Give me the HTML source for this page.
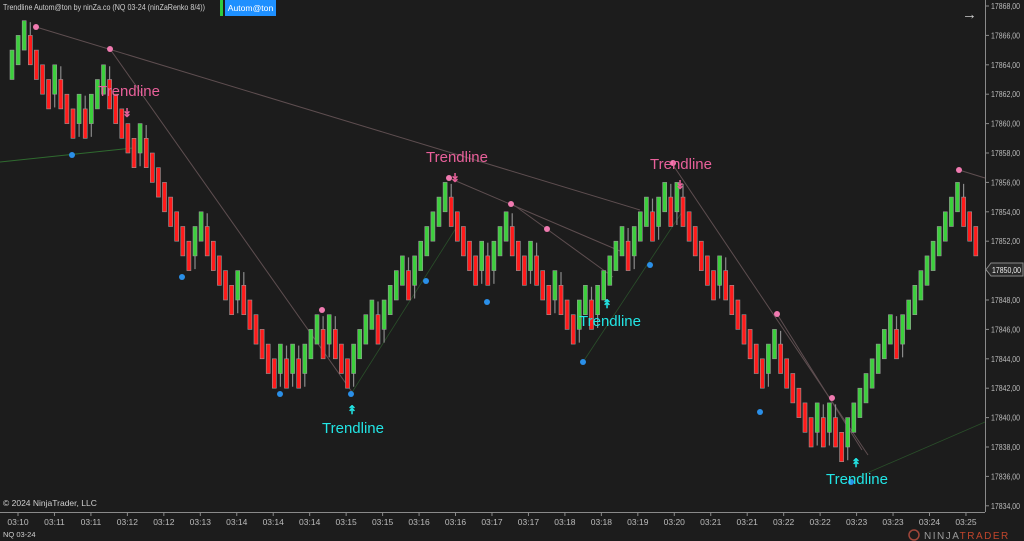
<!DOCTYPE html>
<html><head><meta charset="utf-8"><style>
html,body{margin:0;padding:0;background:#1c1c1c;width:1024px;height:541px;overflow:hidden}
svg{display:block}
text{font-family:"Liberation Sans",sans-serif}
</style></head><body>
<svg id="c" width="1024" height="541" viewBox="0 0 1024 541" xmlns="http://www.w3.org/2000/svg">
<rect width="1024" height="541" fill="#1c1c1c"/>
<g id="lines" fill="none" stroke-width="1">
<line x1="0" y1="162" x2="133" y2="148" stroke="#2f6a2f"/>
<line x1="351" y1="394" x2="458" y2="225" stroke="#2a4f2a" stroke-width="0.8"/>
<line x1="583" y1="362" x2="682" y2="212" stroke="#2a4f2a" stroke-width="0.8"/>
<line x1="851" y1="480" x2="985" y2="422" stroke="#2a4f2a" stroke-width="0.8"/>
<line x1="36" y1="27" x2="640" y2="210" stroke="#5e4e50"/>
<line x1="110" y1="49" x2="352" y2="392" stroke="#5e4e50"/>
<line x1="449" y1="178" x2="620" y2="251" stroke="#5e4e50"/>
<line x1="511" y1="203" x2="613" y2="277" stroke="#5e4e50"/>
<line x1="673" y1="165" x2="868" y2="455" stroke="#5e4e50"/>
<line x1="777" y1="314" x2="862" y2="450" stroke="#5e4e50"/>
<line x1="959" y1="170" x2="985" y2="178" stroke="#5e4e50"/>
</g>
<g id="bars"></g>
<g id="dots"></g>
<g font-size="15">
<text x="98" y="96" fill="#e8609a">Trendline</text>
<text x="426" y="162" fill="#e8609a">Trendline</text>
<text x="650" y="169" fill="#e8609a">Trendline</text>
<text x="322" y="433" fill="#22e5e5">Trendline</text>
<text x="579" y="326" fill="#22e5e5">Trendline</text>
<text x="826" y="484" fill="#22e5e5">Trendline</text>
</g>
<g font-size="12" font-weight="bold" text-anchor="middle">
<text x="127" y="117" fill="#e8609a">↡</text>
<text x="455" y="182" fill="#e8609a">↡</text>
<text x="680" y="189" fill="#e8609a">↡</text>
<text x="352" y="414" fill="#22e5e5">↟</text>
<text x="607" y="308" fill="#22e5e5">↟</text>
<text x="856" y="467" fill="#22e5e5">↟</text>
</g>
<line x1="985.5" y1="0" x2="985.5" y2="512" stroke="#8a8a8a"/>
<line x1="0" y1="512.5" x2="985" y2="512.5" stroke="#8a8a8a"/>
<g id="yax" font-size="8" fill="#bbb"></g>
<g id="xax" font-size="8.5" fill="#bbb"></g>
<path d="M986 269.5 L991 263 H1023 V276 H991 Z" fill="#2a2a2a" stroke="#888"/>
<text x="992" y="273" font-size="8" fill="#eee" textLength="29" lengthAdjust="spacingAndGlyphs">17850,00</text>
<text x="3" y="10" font-size="8.6" fill="#cfcfcf" textLength="202" lengthAdjust="spacingAndGlyphs">Trendline Autom@ton by ninZa.co (NQ 03-24 (ninZaRenko 8/4))</text>
<rect x="220" y="0" width="3" height="16" fill="#2ecc40"/>
<rect x="225" y="0" width="51" height="16" fill="#1e90ff"/>
<text x="250.5" y="11" font-size="8.6" fill="#fff" text-anchor="middle">Autom@ton</text>
<text x="962" y="19" font-size="15" fill="#ccc">→</text>
<text x="3" y="506" font-size="8.5" fill="#cfcfcf">© 2024 NinjaTrader, LLC</text>
<text x="3" y="537" font-size="7.5" fill="#cfcfcf">NQ 03-24</text>
<circle cx="914" cy="535" r="5" fill="none" stroke="#a0463a" stroke-width="1.5"/>
<text x="924" y="539" font-size="10" letter-spacing="1.5" fill="#9a9a9a">NINJA<tspan fill="#c0452c">TRADER</tspan></text>
</svg>
<script>
(function(){
var NS="http://www.w3.org/2000/svg";
function el(p,t,a){var e=document.createElementNS(NS,t);for(var k in a)e.setAttribute(k,a[k]);p.appendChild(e);return e;}
var U=14.7,Y0=6;
function lv(y){return (y-Y0)/U;}
var piv=[[0,64],[4,48],[10,125],[15,80],[28,250],[31,225],[43,372],[50,328],[55,372],[71,196],[76,284],[81,225],[84,284],[86,255],[92,342],[99,240],[103,225],[107,182],[111,240],[122,380],[125,340],[131,445],[133,432],[136,461],[155,196],[158,255]];
var cur=Math.round(lv(piv[0][1]));var lvls=[cur];var dirs=[-1];
for(var i=1;i<piv.length;i++){
 var n=piv[i][0]-piv[i-1][0];var tgt=Math.round(lv(piv[i][1]));var d=tgt-cur;
 if(Math.abs(d)>n)d=(d>0?n:-n);
 if((n-Math.abs(d))%2)d+=(d>0?-1:1);
 var s=d>=0?1:-1;var extra=(n-Math.abs(d))/2;var moves=[];
 for(var k=0;k<Math.abs(d);k++)moves.push(s);
 for(var k=0;k<extra;k++){var pos=Math.floor((k+1)*moves.length/(extra+1));moves.splice(pos,0,-s,s);}
 for(var k=0;k<moves.length;k++){cur+=moves[k];lvls.push(cur);dirs.push(moves[k]);}
}
var g=document.getElementById('bars');
for(var i=0;i<lvls.length;i++){
 var x=12+i*6.1;var cy=Y0+lvls[i]*U;
 var green=dirs[i]<0;
 var yt=cy-U,yb=cy+U;
 if(i>0&&dirs[i]!==dirs[i-1]){
  if(green) el(g,'line',{x1:x,y1:yb,x2:x,y2:yb+U*0.9,stroke:'#8a8a8a','stroke-width':1.2});
  else el(g,'line',{x1:x,y1:yt,x2:x,y2:yt-U*0.9,stroke:'#8a8a8a','stroke-width':1.2});
 }
 el(g,'rect',{x:x-2,y:yt,width:4,height:yb-yt,fill:green?'#3ccf3c':'#ff1a1a',stroke:'#9a9a9a','stroke-width':0.6});
}
var dg=document.getElementById('dots');
[[36,27],[110,49],[322,310],[449,178],[511,204],[547,229],[673,163],[777,314],[832,398],[959,170]].forEach(function(p){el(dg,'circle',{cx:p[0],cy:p[1],r:3,fill:'#f07ab0'});});
[[72,155],[182,277],[280,394],[351,394],[426,281],[487,302],[583,362],[650,265],[760,412],[851,482]].forEach(function(p){el(dg,'circle',{cx:p[0],cy:p[1],r:3,fill:'#2a8fe8'});});
var ya=document.getElementById('yax');
for(var i=0;i<=17;i++){var v=17868-2*i;var y=Y0+i*2*U;
 el(ya,'line',{x1:985,y1:y,x2:989,y2:y,stroke:'#8a8a8a'});
 var t=el(ya,'text',{x:991,y:y+3,textLength:29,lengthAdjust:'spacingAndGlyphs'});t.textContent=v+",00";}
var xa=document.getElementById('xax');
var lab="03:10 03:11 03:11 03:12 03:12 03:13 03:14 03:14 03:14 03:15 03:15 03:16 03:16 03:17 03:17 03:18 03:18 03:19 03:20 03:21 03:21 03:22 03:22 03:23 03:23 03:24 03:25".split(" ");
lab.forEach(function(s,i){var x=18+i*36.46;el(xa,'line',{x1:x,y1:512,x2:x,y2:516,stroke:'#8a8a8a'});var t=el(xa,'text',{x:x,y:525,'text-anchor':'middle'});t.textContent=s;});
})();
</script>
</body></html>
